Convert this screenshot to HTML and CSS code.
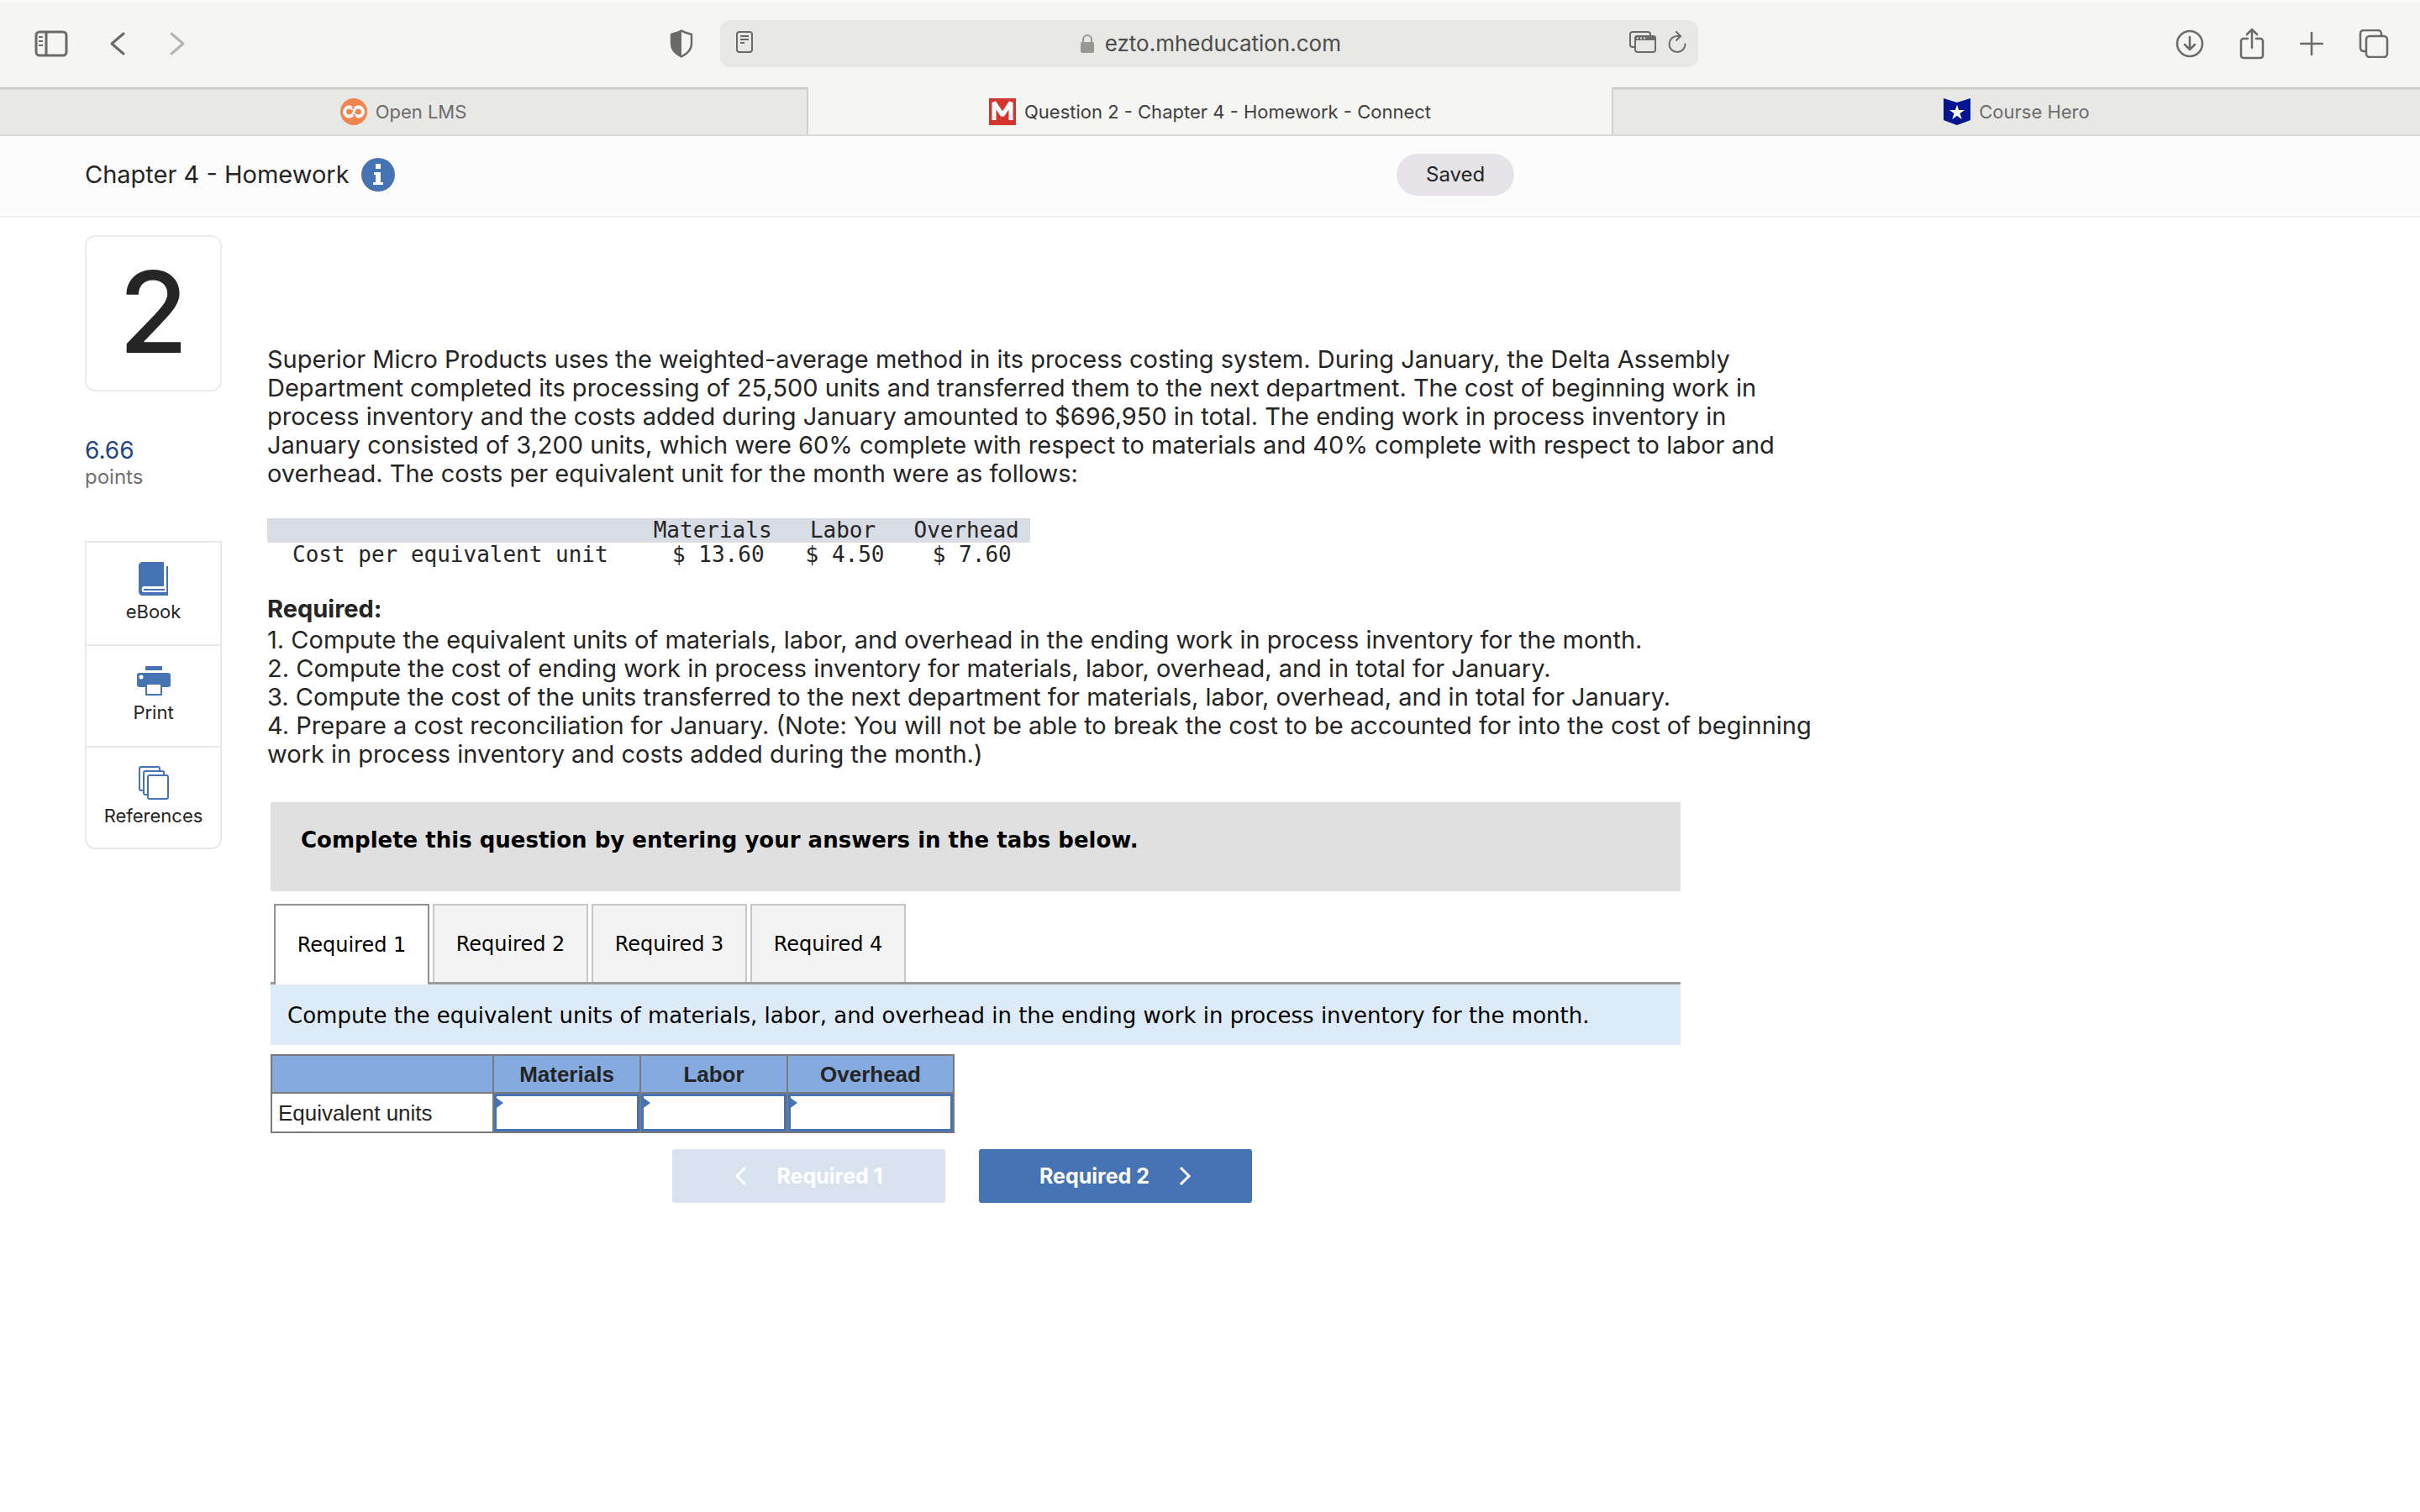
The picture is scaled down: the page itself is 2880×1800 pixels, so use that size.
FILE: index.html
```html
<!DOCTYPE html>
<html lang="en">
<head>
    <meta charset="UTF-8">
    <meta name="viewport" content="width=device-width, initial-scale=1.0">
    <title>Question 2 - Chapter 4 - Homework - Connect</title>
    <link rel="stylesheet" href="styles.css">
</head>
<body>
    <header class="toolbar">
        <div class="tools tools-left">
            <button class="icon-btn" aria-label="Show sidebar">
                <svg width="40" height="32" viewBox="0 0 40 32" fill="none" stroke="currentColor" stroke-width="3"><rect x="2" y="2" width="36" height="28" rx="4"/><path d="M14 2v28"/><path d="M5 8h5M5 13h5M5 18h5" stroke-width="2"/></svg>
            </button>
            <button class="icon-btn back" aria-label="Back">
                <svg width="20" height="32" viewBox="0 0 20 32" fill="none" stroke="currentColor" stroke-width="3" stroke-linecap="round" stroke-linejoin="round"><path d="M17 4L3 16l14 12"/></svg>
            </button>
            <button class="icon-btn forward" aria-label="Forward" disabled>
                <svg width="20" height="32" viewBox="0 0 20 32" fill="none" stroke="currentColor" stroke-width="3" stroke-linecap="round" stroke-linejoin="round"><path d="M3 4l14 12L3 28"/></svg>
            </button>
        </div>
        <div class="address-area">
            <button class="icon-btn" aria-label="Privacy report">
                <svg width="28" height="34" viewBox="0 0 28 34"><path d="M14 1.5C10.500 4 6 4.500 2 6v11c0 7 5 12 12 15.500C21 29 26 24 26 17V6c-4-1.500-8.500-2-12-4.500z" fill="none" stroke="currentColor" stroke-width="2.5" stroke-linejoin="round"/><path d="M14 1.5C10.500 4 6 4.500 2 6v11c0 7 5 12 12 15.500z" fill="currentColor"/></svg>
            </button>
            <div class="address">
                <button class="icon-btn" aria-label="Reader">
                    <svg width="22" height="26" viewBox="0 0 22 26" fill="none" stroke="currentColor" stroke-width="2"><rect x="2" y="1" width="18" height="24" rx="3"/><path d="M6 6h10M6 10h10M6 14h5"/></svg>
                </button>
                <a class="url" href="#">
                    <svg width="18" height="24" viewBox="0 0 18 24" fill="none"><rect x="1" y="10" width="16" height="13" rx="2" fill="#979795"/><path d="M4 11V7a5 5 0 0 1 10 0v4" stroke="#979795" stroke-width="2"/></svg>
                    ezto.mheducation.com
                </a>
                <div class="address-actions">
                    <button class="icon-btn" aria-label="Picture in picture">
                        <svg width="32" height="26" viewBox="0 0 32 26" fill="none" stroke="currentColor" stroke-width="2"><path d="M7 19H4a3 3 0 0 1-3-3V4a3 3 0 0 1 3-3h18a3 3 0 0 1 3 3v2"/><rect x="7" y="6" width="24" height="19" rx="3"/><path d="M7 10V9a3 3 0 0 1 3-3h18a3 3 0 0 1 3 3v1z" fill="currentColor"/><path d="M9 8.500h10" stroke="#e8e8e6" stroke-dasharray="2 2"/></svg>
                    </button>
                    <button class="icon-btn" aria-label="Reload">
                        <svg width="22" height="26" viewBox="0 0 22 26" fill="none" stroke="currentColor" stroke-width="2" stroke-linecap="round" stroke-linejoin="round"><path d="M15 6h-4a9.500 9.500 0 1 0 9.500 9.500"/><path d="M10 1l5 5-5 5"/></svg>
                    </button>
                </div>
            </div>
        </div>
        <div class="tools tools-right">
            <button class="icon-btn" aria-label="Downloads">
                <svg width="34" height="34" viewBox="0 0 34 34" fill="none" stroke="currentColor" stroke-width="2.5" stroke-linecap="round" stroke-linejoin="round"><circle cx="17" cy="17" r="15"/><path d="M17 9v15M11 18l6 6 6-6"/></svg>
            </button>
            <button class="icon-btn" aria-label="Share">
                <svg width="30" height="38" viewBox="0 0 30 38" fill="none" stroke="currentColor" stroke-width="2.5" stroke-linecap="round" stroke-linejoin="round"><path d="M10 13H5a3 3 0 0 0-3 3v17a3 3 0 0 0 3 3h20a3 3 0 0 0 3-3V16a3 3 0 0 0-3-3h-5"/><path d="M15 24V2M9 8l6-6 6 6"/></svg>
            </button>
            <button class="icon-btn" aria-label="New tab">
                <svg width="28" height="28" viewBox="0 0 28 28" fill="none" stroke="currentColor" stroke-width="2.5" stroke-linecap="round"><path d="M14 1v26M1 14h26"/></svg>
            </button>
            <button class="icon-btn" aria-label="Show all tabs">
                <svg width="36" height="34" viewBox="0 0 36 34" fill="none" stroke="currentColor" stroke-width="2.5"><path d="M9 26H6a4 4 0 0 1-4-4V5a4 4 0 0 1 4-4h17a4 4 0 0 1 4 4v3"/><rect x="9" y="8" width="25" height="25" rx="4"/></svg>
            </button>
        </div>
    </header>

    <nav class="browser-tabs">
        <a class="browser-tab" href="#">
            <svg width="32" height="32" viewBox="0 0 32 32" fill="none"><circle cx="16" cy="16" r="16" fill="#f0864d"/><g stroke="#fff" stroke-width="4"><circle cx="10.500" cy="16" r="5.500"/><circle cx="21.500" cy="16" r="5.500"/></g><path d="M14 10l2 3M16 19l2 4M13 15h2M17 17h2" stroke="#f0864d" stroke-width="2"/></svg>
            Open LMS
        </a>
        <a class="browser-tab current" href="#">
            <svg width="32" height="32" viewBox="0 0 32 32"><rect width="32" height="32" fill="#d4352f"/><path d="M6 26V5l10 15L26 5v21" fill="none" stroke="#fff" stroke-width="5" stroke-linejoin="bevel"/></svg>
            Question 2 - Chapter 4 - Homework - Connect
        </a>
        <a class="browser-tab" href="#">
            <svg width="32" height="32" viewBox="0 0 32 32"><path d="M0 0l16 5L32 0v26l-16 6L0 26z" fill="#03158f"/><path d="M16 8l2.200 6H25l-5.500 4 2.200 7-5.700-4.300L10.300 25l2.200-7L7 14h6.800z" fill="#fff"/></svg>
            Course Hero
        </a>
    </nav>

    <div class="page-header">
        <h1>Chapter 4 - Homework</h1>
        <button class="icon-btn info" aria-label="Assignment information">
            <svg width="40" height="40" viewBox="0 0 40 40"><circle cx="20" cy="20" r="20" fill="#4673b3"/><path d="M17 7h6v6h-6zM15 17h8v12h3v3H14v-3h3v-9h-2z" fill="#fff"/></svg>
        </button>
        <span class="saved">Saved</span>
    </div>

    <div class="layout">
        <aside class="sidebar">
            <div class="question-number">2</div>
            <div class="points"><span class="points-value">6.66</span>points</div>
            <div class="resources">
                <a href="#">
                    <svg width="36" height="40" viewBox="0 0 36 40"><path d="M5 0h25v29H6c-3 0-3 7 0 7h27V5h2v35H5c-3 0-5-2-5-5V5c0-3 2-5 5-5z" fill="#4673b3"/><path d="M6 32h25v2H6z" fill="#4673b3"/></svg>
                    eBook
                </a>
                <a href="#">
                    <svg width="40" height="36" viewBox="0 0 40 36"><path d="M10 0h20v5H10z" fill="#4673b3"/><path d="M3 8h34a3 3 0 0 1 3 3v11a3 3 0 0 1-3 3H3a3 3 0 0 1-3-3V11a3 3 0 0 1 3-3z" fill="#4673b3"/><circle cx="5" cy="13" r="2.5" fill="#fff"/><path d="M11 21h18v13H11z" fill="#fff" stroke="#4673b3" stroke-width="2"/></svg>
                    Print
                </a>
                <a href="#">
                    <svg width="36" height="40" viewBox="0 0 36 40" fill="#fff" stroke="#4673b3" stroke-width="2"><rect x="1" y="1" width="24" height="28" rx="2"/><rect x="6" y="6" width="24" height="28" rx="2"/><rect x="11" y="11" width="24" height="28" rx="2"/></svg>
                    References
                </a>
            </div>
        </aside>

        <main class="question">
            <p>Superior Micro Products uses the weighted-average method in its process costing system. During January, the Delta Assembly<br>
                Department completed its processing of 25,500 units and transferred them to the next department. The cost of beginning work in<br>
                process inventory and the costs added during January amounted to $696,950 in total. The ending work in process inventory in<br>
                January consisted of 3,200 units, which were 60% complete with respect to materials and 40% complete with respect to labor and<br>
                overhead. The costs per equivalent unit for the month were as follows:</p>

            <table class="costs">
                <thead>
                    <tr><th></th><th>Materials</th><th>Labor</th><th>Overhead</th></tr>
                </thead>
                <tbody>
                    <tr><td>Cost per equivalent unit</td><td>$ 13.60</td><td>$ 4.50</td><td>$ 7.60</td></tr>
                </tbody>
            </table>

            <h2>Required:</h2>
            <p>1. Compute the equivalent units of materials, labor, and overhead in the ending work in process inventory for the month.<br>
                2. Compute the cost of ending work in process inventory for materials, labor, overhead, and in total for January.<br>
                3. Compute the cost of the units transferred to the next department for materials, labor, overhead, and in total for January.<br>
                4. Prepare a cost reconciliation for January. (Note: You will not be able to break the cost to be accounted for into the cost of beginning<br>
                work in process inventory and costs added during the month.)</p>

            <section class="worksheet">
                <div class="banner">Complete this question by entering your answers in the tabs below.</div>
                <div class="req-tabs">
                    <button class="req-tab active">Required 1</button>
                    <button class="req-tab">Required 2</button>
                    <button class="req-tab">Required 3</button>
                    <button class="req-tab">Required 4</button>
                </div>
                <div class="prompt">Compute the equivalent units of materials, labor, and overhead in the ending work in process inventory for the month.</div>

                <table class="answers">
                    <thead>
                        <tr><th class="row-col"></th><th id="materials">Materials</th><th id="labor">Labor</th><th id="overhead" class="wide-col">Overhead</th></tr>
                    </thead>
                    <tbody>
                        <tr>
                            <td id="units">Equivalent units</td>
                            <td class="answer"><input type="text" aria-labelledby="units materials"></td>
                            <td class="answer"><input type="text" aria-labelledby="units labor"></td>
                            <td class="answer"><input type="text" aria-labelledby="units overhead"></td>
                        </tr>
                    </tbody>
                </table>

                <div class="step-buttons">
                    <button class="step" disabled>
                        <svg width="16" height="24" viewBox="0 0 16 24" fill="none" stroke="currentColor" stroke-width="3"><path d="M13 2L3 12l10 10"/></svg>
                        Required 1
                    </button>
                    <button class="step">
                        Required 2
                        <svg width="16" height="24" viewBox="0 0 16 24" fill="none" stroke="currentColor" stroke-width="3"><path d="M3 2l10 10L3 22"/></svg>
                    </button>
                </div>
            </section>
        </main>
    </div>
</body>
</html>
```
FILE: styles.css
```css
* {
    box-sizing: border-box;
}

body {
    margin: 0;
    background-color: #fff;
    color: #252525;
    font-family: Inter, "Open Sans", sans-serif;
    font-size: 29px;
    line-height: 34px;
}

a {
    color: inherit;
    text-decoration: none;
}

svg {
    display: block;
    flex: none;
}

button {
    font-family: inherit;
    cursor: pointer;
}

.icon-btn {
    padding: 0;
    border: none;
    background: none;
    color: #6a6a68;
}

/* Browser toolbar */
.toolbar {
    display: grid;
    grid-template-columns: 13fr 1224px 14fr;
    align-items: center;
    height: 104px;
    padding-bottom: 2px;
    background-color: #f5f5f3;
    border-top: 2px solid #fbfbfa;
}

.tools {
    display: flex;
    align-items: center;
}

.tools-left {
    padding-left: 41px;
}

.back {
    margin-left: 49px;
}

.forward {
    margin-left: 51px;
    color: #b4b4b2;
}

.tools-right {
    justify-content: flex-end;
    gap: 42px;
    padding-right: 37px;
}

.address-area {
    display: flex;
    align-items: center;
    gap: 32px;
}

.address {
    flex: 1;
    display: flex;
    align-items: center;
    justify-content: space-between;
    height: 56px;
    padding: 0 14px 4px 18px;
    border-radius: 12px;
    background-color: #e8e8e6;
}

.url {
    display: flex;
    align-items: center;
    gap: 12px;
    padding: 4px 0 0 44px;
    color: #4c4c4a;
    font-size: 26px;
}

.address-actions {
    display: flex;
    gap: 14px;
}

/* Browser tabs */
.browser-tabs {
    display: grid;
    grid-template-columns: repeat(3, 1fr);
    height: 58px;
    border-bottom: 2px solid #d9d9d7;
}

.browser-tab {
    display: flex;
    align-items: center;
    justify-content: center;
    gap: 10px;
    padding-top: 2px;
    background-color: #e8e8e6;
    color: #6c6c6a;
    font-size: 22px;
    box-shadow: inset 0 3px 2px -1px #bfbfbd;
}

.browser-tab.current {
    background-color: #f5f5f3;
    color: #3f3f3e;
    border-left: 2px solid #d1d1cf;
    border-right: 2px solid #d1d1cf;
    box-shadow: none;
}

/* Assignment header */
.page-header {
    display: grid;
    grid-template-columns: auto 1fr 1218px;
    align-items: center;
    height: 97px;
    padding: 0 0 3px 101px;
    background-color: #fcfcfc;
    border-bottom: 2px solid #f0f0f0;
}

h1 {
    margin: 0;
    font-size: 29px;
    font-weight: 400;
}

.info {
    margin-left: 14px;
    justify-self: start;
}

.saved {
    justify-self: start;
    padding: 8px 35px;
    border-radius: 26px;
    background-color: #e5e3e7;
    font-size: 24px;
}

/* Question */
.layout {
    display: flex;
    gap: 54px;
    padding: 21px 101px;
}

.sidebar {
    flex: none;
    width: 163px;
}

.question-number {
    padding: 14px 0 18px;
    border: 2px solid #ececec;
    border-radius: 12px;
    font-size: 134px;
    font-weight: 500;
    line-height: 150px;
    text-align: center;
}

.points {
    display: flex;
    flex-direction: column;
    margin-top: 54px;
    color: #717171;
    font-size: 24px;
    line-height: 32px;
}

.points-value {
    color: #21457f;
    font-size: 28px;
}

.resources {
    margin-top: 60px;
    border: 2px solid #e8e8e8;
    border-radius: 0 0 12px 12px;
}

.resources a {
    display: flex;
    flex-direction: column;
    align-items: center;
    justify-content: center;
    gap: 2px;
    height: 121px;
    font-size: 22px;
}

.resources a + a {
    border-top: 2px solid #e8e8e8;
}

.question {
    flex: 1;
    padding-top: 131px;
}

.question p {
    margin: 0;
    white-space: nowrap;
}

.costs {
    margin: 36px 0 33px;
    border-collapse: collapse;
    font-family: "DejaVu Sans Mono", monospace;
    font-size: 26px;
    line-height: 29px;
}

.costs th,
.costs td {
    padding: 0 22px 0 27px;
    font-weight: 400;
    text-align: right;
}

.costs th {
    padding: 0 13px;
    text-align: center;
    background-color: #d8dce5;
}

.costs td:first-child {
    padding: 0 41px 0 30px;
    text-align: left;
}

h2 {
    margin: 0 0 3px;
    font-size: 29px;
    line-height: 34px;
    font-weight: 700;
}

/* Worksheet */
.worksheet {
    max-width: 1682px;
    margin-top: 40px;
    padding-left: 4px;
    color: #000;
    font-family: "DejaVu Sans", sans-serif;
    font-size: 26px;
}

.banner {
    height: 106px;
    padding: 28px 36px;
    background-color: #e0e0e0;
    font-weight: 700;
}

.req-tabs {
    display: flex;
    gap: 4px;
    margin-top: 15px;
    padding-left: 4px;
    border-bottom: 3px solid #9b9b9b;
}

.req-tab {
    width: 185px;
    height: 93px;
    padding: 0;
    border: 2px solid #c6c6c6;
    border-bottom: none;
    background-color: #f3f3f3;
    color: #000;
    font-size: 24px;
}

.req-tab.active {
    margin-bottom: -3px;
    height: 96px;
    border-color: #919191;
    background-color: #fff;
}

.prompt {
    padding: 20px 20px 18px;
    background-color: #ddebf8;
}

.answers {
    margin-top: 11px;
    border: 2px solid #7a7a7a;
    border-collapse: collapse;
    color: #252525;
    font-family: "Liberation Sans", Arial, sans-serif;
    font-size: 26px;
}

.answers th {
    width: 175px;
    height: 45px;
    padding: 0;
    border: 2px solid #7a7a7a;
    background-color: #84aadf;
}

.answers .row-col {
    width: 264px;
}

.answers .wide-col {
    width: 198px;
}

.answers td {
    height: 46px;
    padding: 0 7px;
    border: 2px solid #7a7a7a;
}

.answers .answer {
    position: relative;
    padding: 0;
}

/* corner marker on every input cell */
.answer::before {
    content: "";
    position: absolute;
    top: 3px;
    left: 0;
    border: 8px solid transparent;
    border-left: 11px solid #4673b3;
    border-right: none;
}

.answer input {
    display: block;
    width: 100%;
    height: 45px;
    padding: 0 10px;
    border: 3px solid #4673b3;
    background-color: #fff;
    font-size: 26px;
}

.step-buttons {
    display: flex;
    gap: 40px;
    margin: 19px 0 0 478px;
    font-family: Inter, sans-serif;
}

.step {
    display: flex;
    align-items: center;
    justify-content: center;
    gap: 34px;
    width: 325px;
    height: 64px;
    border: none;
    border-radius: 3px;
    background-color: #4673b3;
    color: #fff;
    font-size: 25px;
    font-weight: 700;
}

.step:disabled {
    background-color: #d9e2ef;
}
```
